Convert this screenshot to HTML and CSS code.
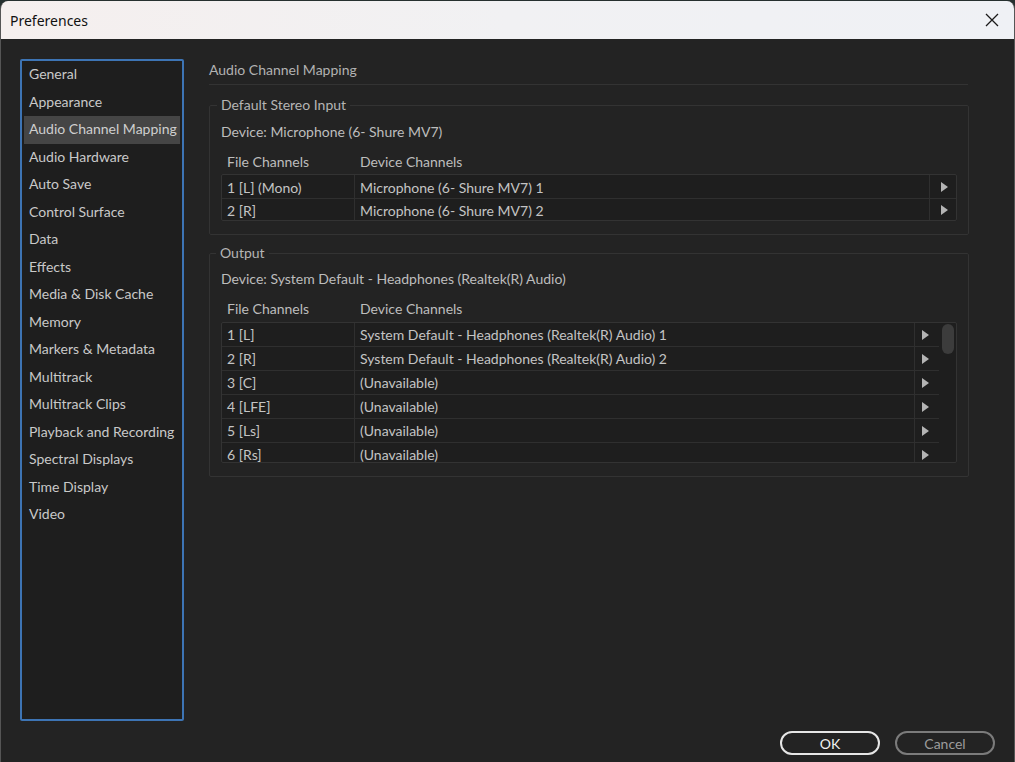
FILE: index.html
```html
<!DOCTYPE html>
<html>
<head>
<meta charset="utf-8">
<link rel="stylesheet" href="styles.css">
</head>
<body>
<div class="window">
  <div class="titlebar">
    <span class="title">Preferences</span>
    <svg class="close" width="14" height="14" viewBox="0 0 14 14"><path d="M1 1 L13 13 M13 1 L1 13" stroke="#1a1a1a" stroke-width="1.3" fill="none"/></svg>
  </div>
  <div class="body">
    <div class="main">
      <ul class="sidebar">
        <li>General</li>
        <li>Appearance</li>
        <li class="sel">Audio Channel Mapping</li>
        <li>Audio Hardware</li>
        <li>Auto Save</li>
        <li>Control Surface</li>
        <li>Data</li>
        <li>Effects</li>
        <li>Media &amp; Disk Cache</li>
        <li>Memory</li>
        <li>Markers &amp; Metadata</li>
        <li>Multitrack</li>
        <li>Multitrack Clips</li>
        <li>Playback and Recording</li>
        <li>Spectral Displays</li>
        <li>Time Display</li>
        <li>Video</li>
      </ul>
      <div class="panel">
        <div class="panel-head">Audio Channel Mapping</div>
        <div class="group">
          <div class="legend">Default Stereo Input</div>
          <div class="device">Device: Microphone (6- Shure MV7)</div>
          <div class="cols"><span class="c1">File Channels</span><span>Device Channels</span></div>
          <div class="table">
            <div class="row"><span class="c1">1 [L] (Mono)</span><span class="c2">Microphone (6- Shure MV7) 1</span><span class="arr"><i></i></span></div>
            <div class="row"><span class="c1">2 [R]</span><span class="c2">Microphone (6- Shure MV7) 2</span><span class="arr"><i></i></span></div>
          </div>
        </div>
        <div class="group out">
          <div class="legend">Output</div>
          <div class="device">Device: System Default - Headphones (Realtek(R) Audio)</div>
          <div class="cols"><span class="c1">File Channels</span><span>Device Channels</span></div>
          <div class="table scroll">
            <div class="rows">
              <div class="row"><span class="c1">1 [L]</span><span class="c2">System Default - Headphones (Realtek(R) Audio) 1</span><span class="arr"><i></i></span></div>
              <div class="row"><span class="c1">2 [R]</span><span class="c2">System Default - Headphones (Realtek(R) Audio) 2</span><span class="arr"><i></i></span></div>
              <div class="row"><span class="c1">3 [C]</span><span class="c2">(Unavailable)</span><span class="arr"><i></i></span></div>
              <div class="row"><span class="c1">4 [LFE]</span><span class="c2">(Unavailable)</span><span class="arr"><i></i></span></div>
              <div class="row"><span class="c1">5 [Ls]</span><span class="c2">(Unavailable)</span><span class="arr"><i></i></span></div>
              <div class="row"><span class="c1">6 [Rs]</span><span class="c2">(Unavailable)</span><span class="arr"><i></i></span></div>
            </div>
            <div class="sbar"><div class="thumb"></div></div>
          </div>
        </div>
      </div>
    </div>
    <div class="footer">
      <button class="btn ok">OK</button>
      <button class="btn cancel">Cancel</button>
    </div>
  </div>
</div>
</body>
</html>
```
FILE: styles.css
```css
* { box-sizing: border-box; }
html, body { margin: 0; padding: 0; }
body {
  background: #26302f;
  width: 1015px;
  height: 762px;
  overflow: hidden;
  font-family: Lato, "Open Sans", sans-serif;
}
.window {
  margin-top: 1px;
  height: 761px;
  border-radius: 8px 8px 0 0;
  overflow: hidden;
  background: #232323;
  border-left: 1px solid #555;
  border-right: 1px solid #555;
  display: flex;
  flex-direction: column;
}
.titlebar {
  height: 38px;
  flex: none;
  background: linear-gradient(90deg, #f5efee 0%, #f1f1f3 50%, #eff1f5 100%);
  display: flex;
  align-items: center;
  justify-content: space-between;
  padding: 0 15px 0 9px;
}
.title {
  font-family: "Noto Sans", "Open Sans", sans-serif;
  font-size: 14px;
  color: #111;
}
.close { display: block; }
.body {
  flex: 1;
  display: flex;
  flex-direction: column;
  padding: 20px 19px 0 19px;
}
.main {
  display: flex;
  gap: 25px;
  height: 662px;
}
.sidebar {
  list-style: none;
  margin: 0;
  padding: 0 2px;
  width: 164px;
  flex: none;
  background: #1e1e1e;
  border: 2px solid #3d74b4;
  border-radius: 2px;
}
.sidebar li {
  height: 27.5px;
  line-height: 26px;
  padding-left: 5px;
  font-size: 14px;
  color: #c9c9c9;
  white-space: nowrap;
}
.sidebar li.sel {
  background: #454545;
  color: #cfcfcf;
}
.panel {
  width: 760px;
  display: flex;
  flex-direction: column;
}
.panel-head {
  font-size: 14px;
  color: #b2b2b2;
  line-height: 20px;
  padding-top: 1px;
  padding-bottom: 4px;
  border-bottom: 1px solid #333;
  margin-right: 1px;
}
.group {
  position: relative;
  margin-top: 20px;
  border: 1px solid #333;
  border-radius: 2px;
  padding: 16px 11px 13px 11px;
}
.group.out { margin-top: 18px; padding-top: 15px; }
.legend {
  position: absolute;
  top: -11px;
  left: 7px;
  padding: 0 4px;
  background: #232323;
  font-size: 14px;
  line-height: 20px;
  color: #b5b5b5;
}
.group.out .legend { left: 6px; }
.device {
  font-size: 14px;
  line-height: 20px;
  color: #bdbdbd;
}
.cols {
  display: flex;
  margin-top: 10px;
  font-size: 14px;
  line-height: 20px;
  color: #bdbdbd;
  padding-left: 6px;
}
.cols .c1 { width: 133px; }
.table {
  margin-top: 2px;
  background: #1e1e1e;
  border: 1px solid #333;
  border-radius: 2px;
}
.group.out .table { margin-top: 3px; }
.row {
  display: flex;
  height: 24px;
  border-bottom: 1px solid #2f2f2f;
  font-size: 14px;
  color: #c4c4c4;
}
.table > .row:last-child { border-bottom: none; height: 21px; }
.row span { display: flex; align-items: center; padding-top: 1px; }
.rows .row span { padding-top: 0; }
.row .c1 {
  width: 133px;
  padding-left: 5px;
  border-right: 1px solid #2f2f2f;
}
.row .c2 {
  flex: 1;
  padding-left: 5px;
  border-right: 1px solid #2f2f2f;
  white-space: nowrap;
}
.row .arr {
  width: 26px;
  justify-content: center;
  padding-top: 0;
}
.arr i {
  display: block;
  width: 0;
  height: 0;
  border-left: 7px solid #b4b4b4;
  border-top: 5px solid transparent;
  border-bottom: 5px solid transparent;
  margin-left: 3px;
}
.table.scroll {
  display: flex;
  height: 141px;
  overflow: hidden;
}
.rows { flex: 1; }
.rows .row .arr { width: 24px; justify-content: flex-start; padding-left: 7px; }
.rows .arr i { margin-left: 0; }
.sbar {
  width: 17px;
  flex: none;
  padding: 1px 2px 0 3px;
}
.thumb {
  width: 12px;
  height: 30px;
  border-radius: 6px;
  background: #3c3c3c;
}
.footer {
  display: flex;
  justify-content: flex-end;
  gap: 15px;
  margin-top: 10px;
}
.btn {
  width: 100px;
  height: 24px;
  border-radius: 12px;
  background: transparent;
  font-family: Lato, "Open Sans", sans-serif;
  font-size: 14px;
  padding: 0;
}
.btn.ok { border: 2px solid #e6e6e6; color: #f2f2f2; }
.btn.cancel { border: 2px solid #7b7b7b; color: #9c9c9c; }
```
